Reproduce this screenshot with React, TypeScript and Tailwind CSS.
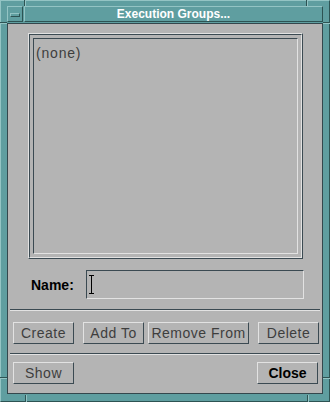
import React from 'react'

const font = "font-['Liberation_Sans',Arial,sans-serif]"

// Motif raised push button: light top-left edge, dark bottom-right edge
function PushButton({
  label,
  width,
  enabled = false,
  className = '',
}: {
  label: string
  width: string
  enabled?: boolean
  className?: string
}) {
  return (
    <button
      type="button"
      className={`${width} h-[22px] shrink-0 flex items-center justify-center border border-t-[#e2e2e2] border-l-[#e2e2e2] border-r-[#3b4a52] border-b-[#3b4a52] bg-[#b4b4b4] text-[14px] leading-none ${
        enabled ? 'text-black font-bold' : 'text-[#3e3e3e] font-normal tracking-[0.5px]'
      } ${className}`}
    >
      {label}
    </button>
  )
}

function Separator() {
  return (
    <div className="mx-[2px] flex flex-col">
      <div className="h-px bg-[#3b4a52]" />
      <div className="h-px bg-[#e2e2e2]" />
    </div>
  )
}

export default function App() {
  return (
    <div
      className={`relative w-[330px] h-[402px] flex flex-col gap-px bg-[#5f9ea0] border border-t-[#93c4c4] border-l-[#93c4c4] border-r-[#2d5353] border-b-[#2d5353] pt-[5px] px-[6px] pb-[7px] ${font}`}
    >
      {/* resize-corner marks in the frame */}
      <span className="absolute left-[23px] top-[-1px] w-px h-[6px] bg-[#2d5353]" />
      <span className="absolute left-[24px] top-[-1px] w-px h-[6px] bg-[#93c4c4]" />
      <span className="absolute left-[305px] top-[-1px] w-px h-[6px] bg-[#2d5353]" />
      <span className="absolute left-[306px] top-[-1px] w-px h-[6px] bg-[#93c4c4]" />
      <span className="absolute left-[24px] bottom-[-1px] w-px h-[7px] bg-[#2d5353]" />
      <span className="absolute left-[25px] bottom-[-1px] w-px h-[7px] bg-[#93c4c4]" />
      <span className="absolute left-[306px] bottom-[-1px] w-px h-[7px] bg-[#2d5353]" />
      <span className="absolute left-[307px] bottom-[-1px] w-px h-[7px] bg-[#93c4c4]" />
      <span className="absolute left-[-1px] top-[21px] w-[7px] h-px bg-[#2d5353]" />
      <span className="absolute left-[-1px] top-[22px] w-[7px] h-px bg-[#93c4c4]" />
      <span className="absolute right-[-1px] top-[21px] w-[7px] h-px bg-[#2d5353]" />
      <span className="absolute right-[-1px] top-[22px] w-[7px] h-px bg-[#93c4c4]" />
      <span className="absolute left-[-1px] top-[376px] w-[7px] h-px bg-[#2d5353]" />
      <span className="absolute left-[-1px] top-[377px] w-[7px] h-px bg-[#93c4c4]" />
      <span className="absolute right-[-1px] top-[376px] w-[7px] h-px bg-[#2d5353]" />
      <span className="absolute right-[-1px] top-[377px] w-[7px] h-px bg-[#93c4c4]" />

      {/* Title row */}
      <div className="h-[16px] flex gap-px shrink-0">
        <div className="w-[16px] h-full flex items-center justify-center border border-t-[#93c4c4] border-l-[#93c4c4] border-r-[#2d5353] border-b-[#2d5353]">
          <span className="w-[10px] h-[4px] mt-[2px] border border-t-[#93c4c4] border-l-[#93c4c4] border-r-[#2d5353] border-b-[#2d5353]" />
        </div>
        <div className="flex-1 h-full flex items-center justify-center border border-t-[#93c4c4] border-l-[#93c4c4] border-r-[#2d5353] border-b-[#2d5353] text-white text-[12px] font-bold leading-none">
          Execution Groups...
        </div>
      </div>

      {/* Dialog body */}
      <div className="flex-1 flex flex-col bg-[#b4b4b4] border border-[#34474d]">
        {/* Scrolled list with etched frame */}
        <div className="mt-[9px] ml-[20px] w-[275px] h-[226px] border border-t-[#e2e2e2] border-l-[#e2e2e2] border-r-[#3b4a52] border-b-[#3b4a52]">
          <div className="w-full h-full border border-t-[#3b4a52] border-l-[#3b4a52] border-r-[#e2e2e2] border-b-[#e2e2e2] p-[3px]">
            <div className="w-full h-full border border-t-[#3b4a52] border-l-[#3b4a52] border-r-[#e2e2e2] border-b-[#e2e2e2] px-[2px] pt-[2px]">
              <span className="text-[14px] font-normal tracking-[0.8px] text-[#3e3e3e] leading-none">
                (none)
              </span>
            </div>
          </div>
        </div>

        {/* Name field */}
        <div className="mt-[11px] h-[29px] flex items-center">
          <span className="ml-[23px] w-[55px] text-[14px] font-bold text-black leading-none">
            Name:
          </span>
          <div className="w-[218px] h-full flex items-center border border-t-[#3b4a52] border-l-[#3b4a52] border-r-[#e2e2e2] border-b-[#e2e2e2]">
            <svg width="5" height="19" viewBox="0 0 5 19" className="ml-[2px]">
              <path d="M0 0.5H5M2.5 0V19M0 18.5H5" stroke="#000" strokeWidth="1" fill="none" />
            </svg>
          </div>
        </div>

        <div className="mt-[10px]">
          <Separator />
        </div>

        {/* Action buttons */}
        <div className="mt-[11px] pl-[5px] flex">
          <PushButton label="Create" width="w-[61px]" />
          <PushButton label="Add To" width="w-[61px]" className="ml-[9px]" />
          <PushButton label="Remove From" width="w-[101px]" className="ml-[4px]" />
          <PushButton label="Delete" width="w-[61px]" className="ml-[9px]" />
        </div>

        <div className="mt-[9px]">
          <Separator />
        </div>

        <div className="mt-[7px] pl-[5px] pr-[4px] flex justify-between">
          <PushButton label="Show" width="w-[61px]" />
          <PushButton label="Close" width="w-[61px]" enabled />
        </div>
      </div>
    </div>
  )
}
